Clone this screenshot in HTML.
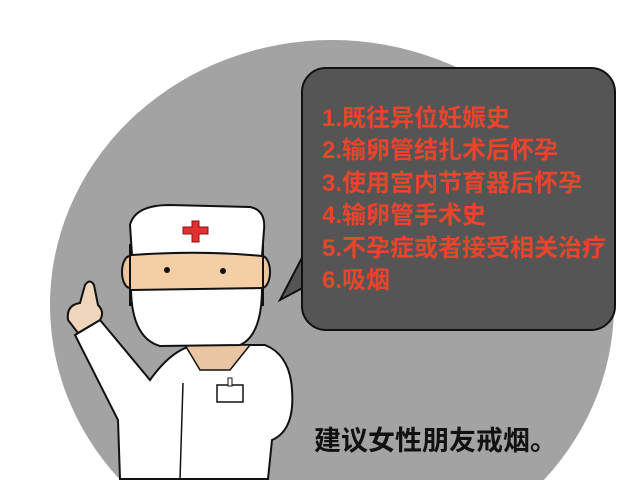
<!DOCTYPE html>
<html style="overflow:hidden"><head><meta charset="utf-8"><style>
html,body{margin:0;width:640px;height:480px;overflow:hidden;background:#fff}
body{position:relative;font-family:"Liberation Sans","Noto Sans CJK SC",sans-serif}
svg{display:block;overflow:hidden}
.t{position:absolute;left:322px;color:#e8452c;font-size:24px;font-weight:bold;line-height:26px;white-space:nowrap}
</style></head><body>
<svg width="640" height="480" viewBox="0 0 640 480" style="position:absolute;left:0;top:0">
<path d="M120.2,480 A282,265 0 1 1 543.8,480 Z" fill="#a3a3a3"/>
<path d="M306,250 L280,300 L308,285 Z" fill="#555" stroke="#111" stroke-width="2"/>
<rect x="302" y="68" width="313" height="262" rx="24" fill="#555" stroke="#111" stroke-width="2"/>
<path d="M120,479 L118,420 L75,335 L100,320 L150,380 Q175,345 200,345 L265,345 Q290,355 292,390 Q295,430 272,440 L268,479 Z" fill="#fff" stroke="#111" stroke-width="2"/>
<path d="M185,345 L200,370 L230,370 L250,345 Z" fill="#e9c5a2" stroke="#111" stroke-width="1.5"/>
<line x1="183" y1="383" x2="180" y2="479" stroke="#111" stroke-width="1.5"/>
<rect x="217" y="385" width="26" height="17" fill="#fff" stroke="#111" stroke-width="1.5"/>
<rect x="228" y="378" width="4" height="8" fill="#fff" stroke="#111" stroke-width="1"/>
<path d="M68,320 Q66,305 80,303 L85,285 Q90,278 94,285 L98,305 Q105,312 100,320 L78,333 Z" fill="#f0d6bc" stroke="#111" stroke-width="2"/>
<ellipse cx="130" cy="272" rx="8" ry="16" fill="#e9c5a2" stroke="#111" stroke-width="2"/>
<ellipse cx="262" cy="272" rx="8" ry="16" fill="#e9c5a2" stroke="#111" stroke-width="2"/>
<rect x="130" y="245" width="133" height="60" fill="#f4cfa6" stroke="#111" stroke-width="2"/>
<circle cx="167" cy="270" r="3" fill="#111"/><circle cx="223" cy="271" r="3" fill="#111"/>
<path d="M131,290 L262,288 Q262,335 240,345 L160,346 Q132,338 131,290 Z" fill="#fff" stroke="#111" stroke-width="2"/>
<path d="M132,255 L130,225 Q135,205 170,205 L250,207 Q266,210 264,230 L262,256 Q200,250 132,255 Z" fill="#fff" stroke="#111" stroke-width="2"/>
<path d="M192,221 h7 v6 h9 v7 h-9 v8 h-7 v-8 h-9 v-7 h9 z" fill="#e03030" stroke="#8a1010" stroke-width="1"/>
</svg>
<div class="t" style="top:106px">1.既往异位妊娠史</div>
<div class="t" style="top:138px">2.输卵管结扎术后怀孕</div>
<div class="t" style="top:171px">3.使用宫内节育器后怀孕</div>
<div class="t" style="top:203px">4.输卵管手术史</div>
<div class="t" style="top:236px">5.不孕症或者接受相关治疗</div>
<div class="t" style="top:268px">6.吸烟</div>
<div style="position:absolute;left:314px;top:426px;font-size:27px;line-height:30px;font-weight:bold;color:#111;white-space:nowrap">建议女性朋友戒烟。</div>
</body></html>
